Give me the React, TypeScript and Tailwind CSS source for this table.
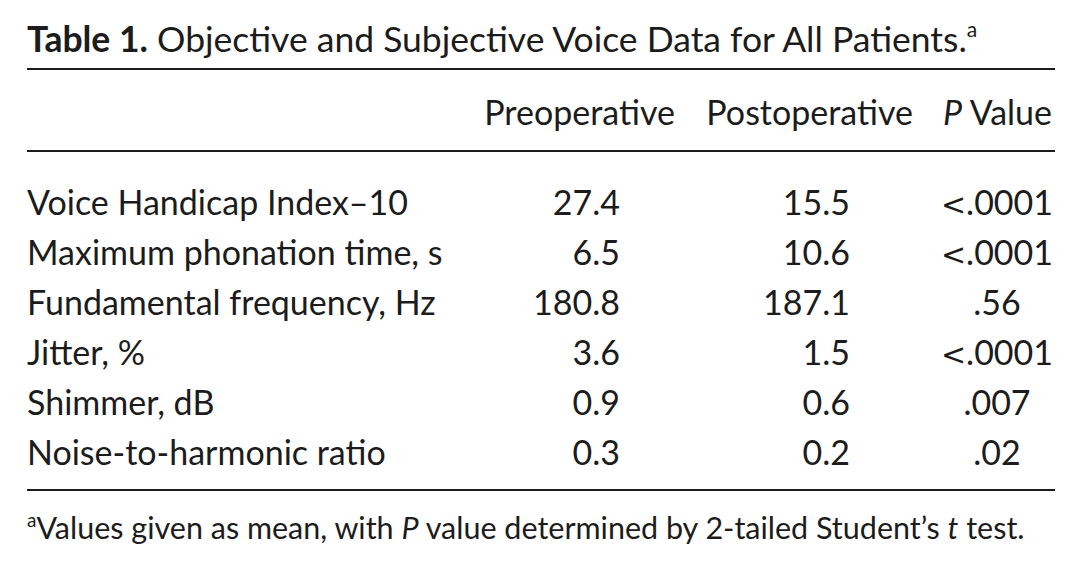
import React from "react";

const rows: [string, string, string, string, boolean][] = [
  ["Voice Handicap Index\u201310", "27.4", "15.5", ".0001", true],
  ["Maximum phonation time, s", "6.5", "10.6", ".0001", true],
  ["Fundamental frequency, Hz", "180.8", "187.1", ".56", false],
  ["Jitter, %", "3.6", "1.5", ".0001", true],
  ["Shimmer, dB", "0.9", "0.6", ".007", false],
  ["Noise-to-harmonic ratio", "0.3", "0.2", ".02", false],
];

export default function App() {
  return (
    <div
      className="w-[1080px] h-[571px] bg-white text-[#1c1c1c] overflow-hidden pl-[27px] pr-[25px]"
      style={{ fontFamily: "Lato, 'Open Sans', sans-serif" }}
    >
      <div className="pt-[19px] h-[68px] text-[35.5px] leading-[40px] whitespace-nowrap">
        <span className="font-bold">Table 1.</span> Objective and Subjective Voice Data for All Patients.
        <sup className="text-[21px] relative -top-[15px]">a</sup>
      </div>
      <div className="border-t-2 border-[#1c1c1c]" />
      <div className="grid grid-cols-[441px_222px_237px_128px] h-[80px] items-center text-[34px] leading-[40px] whitespace-nowrap pt-[4px]">
        <div />
        <div className="text-right pr-[15px]">Preoperative</div>
        <div className="text-right pr-[14px]">Postoperative</div>
        <div className="text-right pr-[3px]">
          <span className="italic">P</span> Value
        </div>
      </div>
      <div className="border-t-2 border-[#1c1c1c]" />
      <div className="pt-[25px] pb-[12px] text-[34px] leading-[50px] whitespace-nowrap">
        {rows.map((r) => (
          <div key={r[0]} className="grid grid-cols-[441px_222px_237px_128px] h-[50px]">
            <div>{r[0]}</div>
            <div className="text-right pr-[70px]">{r[1]}</div>
            <div className="text-right pr-[77px]">{r[2]}</div>
            <div className="text-center pl-[12px]">
              {r[4] && (
                <span
                  className="text-[30px] leading-[10px]"
                  style={{ fontFamily: "'DejaVu Sans', sans-serif" }}
                >
                  {"<"}
                </span>
              )}
              {r[3]}
            </div>
          </div>
        ))}
      </div>
      <div className="border-t-2 border-[#1c1c1c]" />
      <div className="pt-[16px] text-[30.5px] leading-[40px] whitespace-nowrap">
        <sup className="text-[19px] relative -top-[12px]">a</sup>Values given as mean, with{" "}
        <span className="italic">P</span> value determined by 2-tailed Student{"\u2019"}s{" "}
        <span className="italic">t</span> test.
      </div>
    </div>
  );
}
